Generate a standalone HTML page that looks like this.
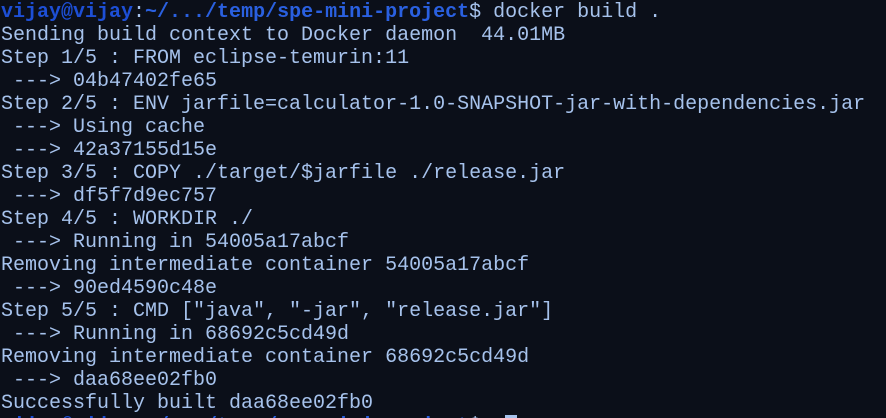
<!DOCTYPE html>
<html><head><style>
html,body{margin:0;padding:0;background:#0b0f19;width:886px;height:418px;overflow:hidden}
pre{margin:0;padding:0 0 0 1px;position:relative;top:1px;font-family:"Liberation Mono",monospace;font-size:20px;line-height:23px;color:#a6c2ec;white-space:pre}
.u{color:#1d4fd6;font-weight:bold}
.p{color:#2a60e0;font-weight:bold}
.c{background:#a6c2ec}
</style></head><body><pre><span class="u">vijay@vijay</span>:<span class="p">~/.../temp/spe-mini-project</span>$ docker build .
Sending build context to Docker daemon  44.01MB
Step 1/5 : FROM eclipse-temurin:11
 ---&gt; 04b47402fe65
Step 2/5 : ENV jarfile=calculator-1.0-SNAPSHOT-jar-with-dependencies.jar
 ---&gt; Using cache
 ---&gt; 42a37155d15e
Step 3/5 : COPY ./target/$jarfile ./release.jar
 ---&gt; df5f7d9ec757
Step 4/5 : WORKDIR ./
 ---&gt; Running in 54005a17abcf
Removing intermediate container 54005a17abcf
 ---&gt; 90ed4590c48e
Step 5/5 : CMD ["java", "-jar", "release.jar"]
 ---&gt; Running in 68692c5cd49d
Removing intermediate container 68692c5cd49d
 ---&gt; daa68ee02fb0
Successfully built daa68ee02fb0
<span class="u">vijay@vijay</span>:<span class="p">~/.../temp/spe-mini-project</span>$  <span class="c"> </span></pre></body></html>
